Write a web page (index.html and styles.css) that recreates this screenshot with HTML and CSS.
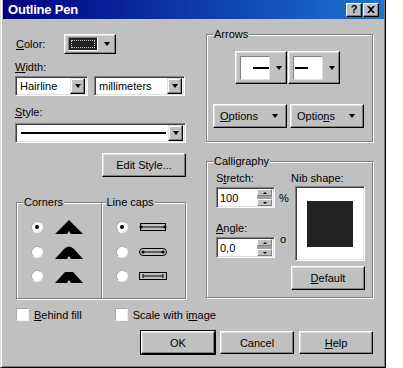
FILE: index.html
```html
<!DOCTYPE html>
<html lang="en">
<head>
  <meta charset="UTF-8">
  <title>Outline Pen</title>
  <link rel="stylesheet" href="styles.css">
</head>
<body>
  <div class="dialog">
    <div class="titlebar">
      <span class="title">Outline Pen</span>
      <div class="tb-buttons">
        <span class="tb-btn">?</span>
        <span class="tb-btn tb-close">
          <svg width="8" height="7" viewBox="0 0 8 7"><path d="M0 0h2l2 2 2-2h2L5 3.5 8 7H6L4 5 2 7H0l3-3.5z" fill="#000"/></svg>
        </span>
      </div>
    </div>

    <div class="content">
      <div class="columns">
        <div class="left">
          <div class="color-row">
            <span class="color-label"><u>C</u>olor:</span>
            <div class="btn color-btn">
              <span class="swatch"></span>
              <span class="arrow"></span>
            </div>
          </div>

          <div class="lbl width-lbl"><u>W</u>idth:</div>
          <div class="width-row">
            <div class="combo combo-hair">
              <span class="combo-text">Hairline</span>
              <span class="combo-btn"><span class="arrow"></span></span>
            </div>
            <div class="combo combo-unit">
              <span class="combo-text">millimeters</span>
              <span class="combo-btn"><span class="arrow"></span></span>
            </div>
          </div>

          <div class="lbl style-lbl"><u>S</u>tyle:</div>
          <div class="combo combo-style">
            <span class="style-line"></span>
            <span class="combo-btn"><span class="arrow"></span></span>
          </div>

          <div class="btn edit-style">Edit Style...</div>

          <div class="group joints">
            <div class="joint-col corners">
              <span class="legend">Corners</span>
              <div class="opt"><span class="radio checked"></span>
                <svg width="28" height="14" viewBox="0 0 28 14"><polygon points="0,14 14,0 28,14 16,14 14,11 12,14" fill="#000"/></svg>
              </div>
              <div class="opt"><span class="radio"></span>
                <svg width="28" height="14" viewBox="0 0 28 14"><path d="M0 14 L9 4 Q14 -1 19 4 L28 14 H16 L14 11 L12 14 Z" fill="#000"/></svg>
              </div>
              <div class="opt"><span class="radio"></span>
                <svg width="28" height="14" viewBox="0 0 28 14"><polygon points="0,14 10,3 18,3 28,14 16,14 14,11 12,14" fill="#000"/></svg>
              </div>
            </div>
            <div class="joint-col caps">
              <span class="legend">Line caps</span>
              <div class="opt"><span class="radio checked"></span>
                <svg width="30" height="10" viewBox="0 0 30 10"><rect x="2.5" y="1.5" width="25" height="7" fill="none" stroke="#000"/><line x1="3" y1="5" x2="27" y2="5" stroke="#000"/><circle cx="3" cy="5" r="1.6"/><circle cx="27" cy="5" r="1.6"/></svg>
              </div>
              <div class="opt"><span class="radio"></span>
                <svg width="30" height="10" viewBox="0 0 30 10"><rect x="1.5" y="1.5" width="27" height="7" rx="3.5" fill="none" stroke="#000"/><line x1="5" y1="5" x2="25" y2="5" stroke="#000"/><circle cx="5" cy="5" r="1.6"/><circle cx="25" cy="5" r="1.6"/></svg>
              </div>
              <div class="opt"><span class="radio"></span>
                <svg width="30" height="10" viewBox="0 0 30 10"><rect x="1.5" y="1.5" width="27" height="7" fill="none" stroke="#000"/><line x1="5" y1="5" x2="25" y2="5" stroke="#000"/><line x1="5" y1="3" x2="5" y2="7" stroke="#000"/><line x1="25" y1="3" x2="25" y2="7" stroke="#000"/></svg>
              </div>
            </div>
          </div>
        </div>

        <div class="right">
          <div class="group arrows">
            <span class="legend">Arrows</span>
            <div class="arrow-row">
              <div class="btn arrow-pick">
                <span class="arrow-box"><span class="arrow-line start"></span></span>
                <span class="arrow"></span>
              </div>
              <div class="btn arrow-pick">
                <span class="arrow-box"><span class="arrow-line end"></span></span>
                <span class="arrow"></span>
              </div>
            </div>
            <div class="options-row">
              <div class="btn options"><span><u>O</u>ptions</span><span class="arrow"></span></div>
              <div class="btn options"><span>Optio<u>n</u>s</span><span class="arrow"></span></div>
            </div>
          </div>

          <div class="group calligraphy">
            <span class="legend">Calligraphy</span>
            <div class="calli-left">
              <div class="lbl">S<u>t</u>retch:</div>
              <div class="spin-row">
                <div class="spin">
                  <span class="spin-text">100</span>
                  <span class="spin-btns"><span class="spin-up"></span><span class="spin-down"></span></span>
                </div>
                <span class="unit">%</span>
              </div>
              <div class="lbl angle-lbl"><u>A</u>ngle:</div>
              <div class="spin-row">
                <div class="spin">
                  <span class="spin-text">0,0</span>
                  <span class="spin-btns"><span class="spin-up"></span><span class="spin-down"></span></span>
                </div>
                <span class="unit degree">o</span>
              </div>
            </div>
            <div class="calli-right">
              <div class="lbl">Nib shape:</div>
              <div class="nib-box"><span class="nib"></span></div>
              <div class="btn default-btn"><u>D</u>efault</div>
            </div>
          </div>
        </div>
      </div>

      <div class="checks">
        <span class="check"></span><span class="check-label"><u>B</u>ehind fill</span>
        <span class="check check-scale"></span><span class="check-label">Scale with i<u>m</u>age</span>
      </div>

      <div class="actions">
        <div class="btn action default">OK</div>
        <div class="btn action">Cancel</div>
        <div class="btn action"><u>H</u>elp</div>
      </div>
    </div>
  </div>
</body>
</html>
```

FILE: styles.css
```css
* {
  box-sizing: border-box;
}
html, body {
  margin: 0;
  padding: 0;
  background: #fff;
  font-family: 'Liberation Sans', Arial, sans-serif;
  font-size: 11px;
  color: #000;
}
u {
  text-decoration: underline;
  text-underline-offset: 1px;
}

.dialog {
  width: 386px;
  height: 368px;
  background: #c0c0c0;
  border-left: 1px solid #dfdfdf;
  border-right: 1px solid #000;
  border-bottom: 1px solid #000;
  box-shadow: inset 1px 0 #fff, inset -1px -1px #808080;
  padding: 0 1px 2px 2px;
}

/* title bar */
.titlebar {
  height: 19px;
  background: linear-gradient(90deg, #000080, #1c74d4);
  display: flex;
  align-items: center;
  justify-content: space-between;
  padding: 0 5px 0 5px;
}
.title {
  color: #fff;
  font-weight: bold;
  font-size: 13px;
  letter-spacing: -0.2px;
}
.tb-buttons {
  display: flex;
  gap: 1px;
}
.tb-btn {
  width: 16px;
  height: 14px;
  background: #c0c0c0;
  border: 1px solid;
  border-color: #fff #000 #000 #fff;
  box-shadow: inset -1px -1px #808080;
  display: flex;
  align-items: center;
  justify-content: center;
  font-weight: bold;
  font-size: 11px;
  line-height: 1;
}

/* common controls */
.btn {
  background: #c0c0c0;
  border: 1px solid;
  border-color: #fff #000 #000 #fff;
  box-shadow: inset -1px -1px #808080, inset 1px 1px #dfdfdf;
  display: flex;
  align-items: center;
  justify-content: center;
}
.arrow {
  display: inline-block;
  width: 0;
  height: 0;
  border-left: 3.5px solid transparent;
  border-right: 3.5px solid transparent;
  border-top: 4px solid #000;
}
.lbl {
  line-height: 13px;
}
.combo, .spin, .nib-box {
  background: #fff;
  border: 1px solid;
  border-color: #808080 #fff #fff #808080;
  box-shadow: inset 1px 1px #404040, inset -1px -1px #dfdfdf;
}
.combo {
  height: 20px;
  display: flex;
  align-items: center;
  padding: 2px;
}
.combo-text {
  flex: 1;
  padding-left: 2px;
}
.combo-btn {
  width: 15px;
  height: 16px;
  background: #c0c0c0;
  border: 1px solid;
  border-color: #dfdfdf #000 #000 #dfdfdf;
  box-shadow: inset -1px -1px #808080, inset 1px 1px #fff;
  display: flex;
  align-items: center;
  justify-content: center;
}

.content {
  padding: 15px 11px 0 12px;
}
.columns {
  display: flex;
  gap: 20px;
}

/* left column */
.left {
  width: 171px;
}
.color-row {
  display: flex;
  align-items: center;
  height: 20px;
}
.color-label {
  width: 49px;
  padding-left: 1px;
}
.color-btn {
  width: 52px;
  height: 20px;
  justify-content: flex-start;
  padding-left: 3px;
  gap: 6px;
}
.swatch {
  width: 30px;
  height: 14px;
  background: #222;
  border: 1px solid;
  border-color: #808080 #fff #fff #808080;
  outline: 1px dotted #c8c8c8;
  outline-offset: -4px;
}
.width-lbl {
  margin-top: 7px;
}
.width-row {
  display: flex;
  gap: 6px;
  margin-top: 2px;
}
.combo-hair {
  width: 73px;
}
.combo-unit {
  width: 91px;
}
.style-lbl {
  margin-top: 10px;
}
.combo-style {
  margin-top: 4px;
  width: 171px;
}
.style-line {
  flex: 1;
  height: 2px;
  background: #000;
  margin: 0 2px 0 3px;
}
.edit-style {
  width: 84px;
  height: 24px;
  margin: 10px 0 0 87px;
}

/* etched groups */
.group {
  position: relative;
  border: 1px solid #808080;
  box-shadow: inset 1px 1px #fff, 1px 1px #fff;
}
.legend {
  position: absolute;
  top: -7px;
  left: 6px;
  padding: 0 1px;
  line-height: 13px;
  background: #c0c0c0;
}
.joints {
  display: flex;
  margin: 25px 0 0 1px;
  height: 97px;
  width: 170px;
}
.joint-col {
  position: relative;
  flex: 1;
  padding: 12px 0 0 14px;
}
.joint-col.caps {
  border-left: 1px solid #808080;
  box-shadow: inset 1px 0 #fff;
}
.joint-col.caps .legend {
  left: 4px;
}
.opt {
  display: flex;
  align-items: center;
  height: 24.5px;
  gap: 12px;
}
.caps .opt {
  gap: 10px;
}
.radio {
  width: 12px;
  height: 12px;
  border-radius: 50%;
  background: #fff;
  border: 1px solid;
  border-color: #a8a8a8 #f0f0f0 #f0f0f0 #a8a8a8;
  display: flex;
  align-items: center;
  justify-content: center;
}
.radio.checked::after {
  content: "";
  width: 4px;
  height: 4px;
  border-radius: 50%;
  background: #000;
}

/* right column */
.right {
  width: 168px;
}
.arrows {
  height: 108px;
  padding-top: 16px;
}
.arrow-row {
  display: flex;
  justify-content: center;
  gap: 1px;
  margin-left: -4px;
}
.arrow-pick {
  width: 52px;
  height: 33px;
  justify-content: flex-start;
  padding-left: 4px;
  gap: 6px;
}
.arrow-box {
  width: 30px;
  height: 24px;
  background: #fff;
  border: 1px solid;
  border-color: #808080 #dfdfdf #dfdfdf #808080;
  display: flex;
  align-items: center;
}
.arrow-line {
  height: 2px;
  background: #000;
}
.arrow-line.start {
  width: 16px;
  margin-left: 12px;
}
.arrow-line.end {
  width: 13px;
  margin-left: 1px;
}
.options-row {
  display: flex;
  gap: 3px;
  margin: 20px 0 0 6px;
}
.options {
  width: 74px;
  height: 24px;
  justify-content: space-between;
  padding: 0 8px 0 6px;
}

.calligraphy {
  margin-top: 19px;
  height: 137px;
  display: flex;
  padding: 10px 0 0 9px;
}
.calli-left {
  width: 74px;
}
.spin-row {
  display: flex;
  align-items: center;
  margin-top: 2px;
}
.spin {
  width: 59px;
  height: 21px;
  display: flex;
  align-items: center;
  padding: 2px;
}
.spin-text {
  flex: 1;
  padding-left: 1px;
}
.spin-btns {
  width: 15px;
  height: 17px;
  display: flex;
  flex-direction: column;
  justify-content: space-between;
  background: #a0a0a0;
}
.spin-up, .spin-down {
  height: 7px;
  background: #c0c0c0;
  border: 1px solid;
  border-color: #fff #808080 #808080 #fff;
  display: flex;
  align-items: center;
  justify-content: center;
}
.spin-up::after, .spin-down::after {
  content: "";
  border-left: 2px solid transparent;
  border-right: 2px solid transparent;
}
.spin-up::after {
  border-bottom: 2px solid #000;
}
.spin-down::after {
  border-top: 2px solid #000;
}
.unit {
  margin-left: 4px;
}
.unit.degree {
  align-self: flex-start;
  margin-top: -4px;
  margin-left: 5px;
}
.angle-lbl {
  margin-top: 14px;
}
.calli-right {
  margin-left: 1px;
}
.nib-box {
  width: 70px;
  height: 75px;
  margin: 1px 0 0 4px;
  display: flex;
  align-items: center;
  justify-content: center;
}
.nib {
  width: 46px;
  height: 46px;
  background: #222;
}
.default-btn {
  width: 74px;
  height: 24px;
  margin-top: 5px;
}

/* bottom */
.checks {
  display: flex;
  align-items: center;
  margin-top: 9px;
  padding-left: 1px;
  height: 13px;
}
.check {
  width: 13px;
  height: 13px;
  background: #fff;
  border: 1px solid;
  border-color: #a8a8a8 #f0f0f0 #f0f0f0 #a8a8a8;
}
.check-label {
  margin-left: 5px;
}
.check-scale {
  margin-left: 33px;
}
.actions {
  display: flex;
  justify-content: flex-end;
  gap: 5px;
  margin-top: 10px;
  padding-right: 0;
}
.action {
  width: 74px;
  height: 23px;
}
.action.default {
  outline: 1px solid #000;
  outline-offset: 0;
}
```
